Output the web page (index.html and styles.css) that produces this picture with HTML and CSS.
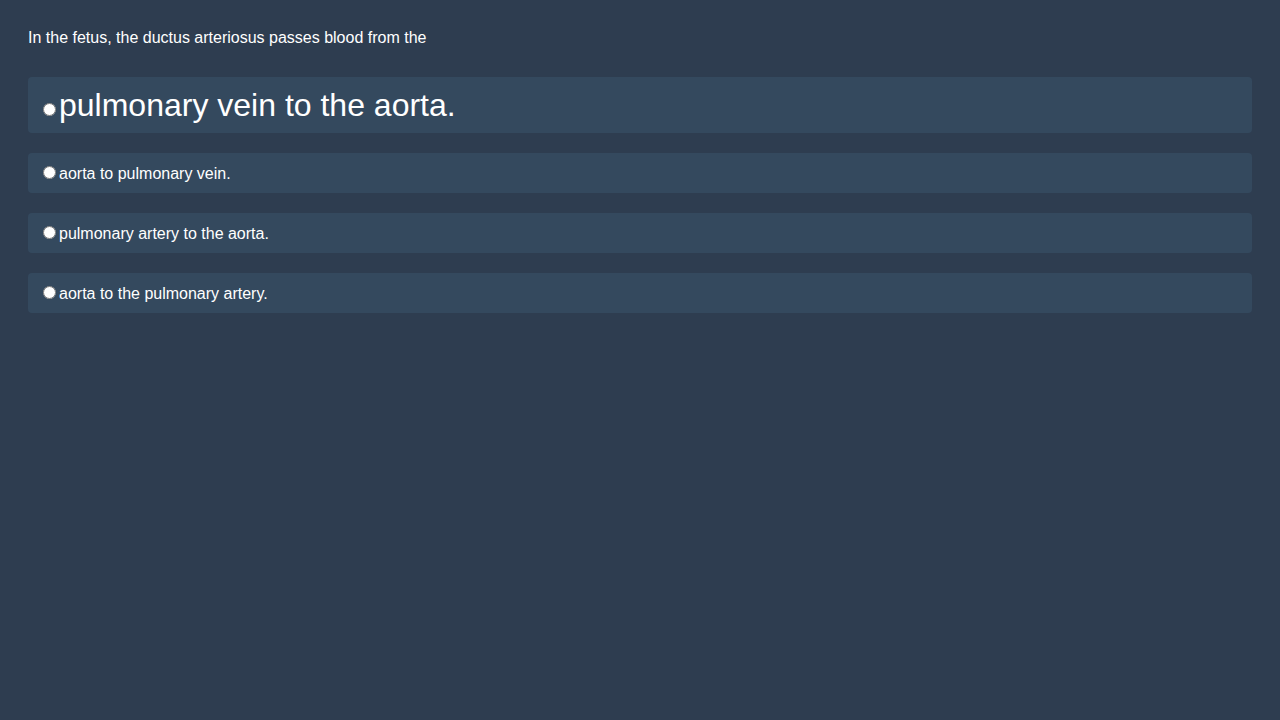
FILE: index.html
```html
<!DOCTYPE html>
<html>
<head>
<meta charset="utf-8">
<link rel="stylesheet" href="styles.css">
</head>
<body>
<div class="quiz">
  <div class="question">In the fetus, the ductus arteriosus passes blood from the</div>
  <div class="options">
    <label class="option option-large"><input type="radio" name="q">pulmonary vein to the aorta.</label>
    <label class="option"><input type="radio" name="q">aorta to pulmonary vein.</label>
    <label class="option"><input type="radio" name="q">pulmonary artery to the aorta.</label>
    <label class="option"><input type="radio" name="q">aorta to the pulmonary artery.</label>
  </div>
</div>
</body>
</html>
```
FILE: styles.css
```css
html, body {
  margin: 0;
  padding: 0;
  background: #2e3d50;
  height: 100%;
}
body {
  font-family: "Liberation Sans", Arial, sans-serif;
  color: #ffffff;
}
.quiz {
  padding: 28px;
}
.question {
  font-size: 16px;
  line-height: 20px;
  margin-bottom: 29px;
}
.options {
  display: flex;
  flex-direction: column;
  gap: 20px;
}
.option {
  display: block;
  background: #34495e;
  border-radius: 4px;
  padding: 11px 10px 9px;
  font-size: 16px;
  line-height: 20px;
  height: 40px;
  box-sizing: border-box;
}
.option-large {
  font-size: 32px;
  line-height: 36px;
  padding: 10px;
  height: 56px;
}
.option input {
  margin: 2px 3px 0 5px;
}
```
